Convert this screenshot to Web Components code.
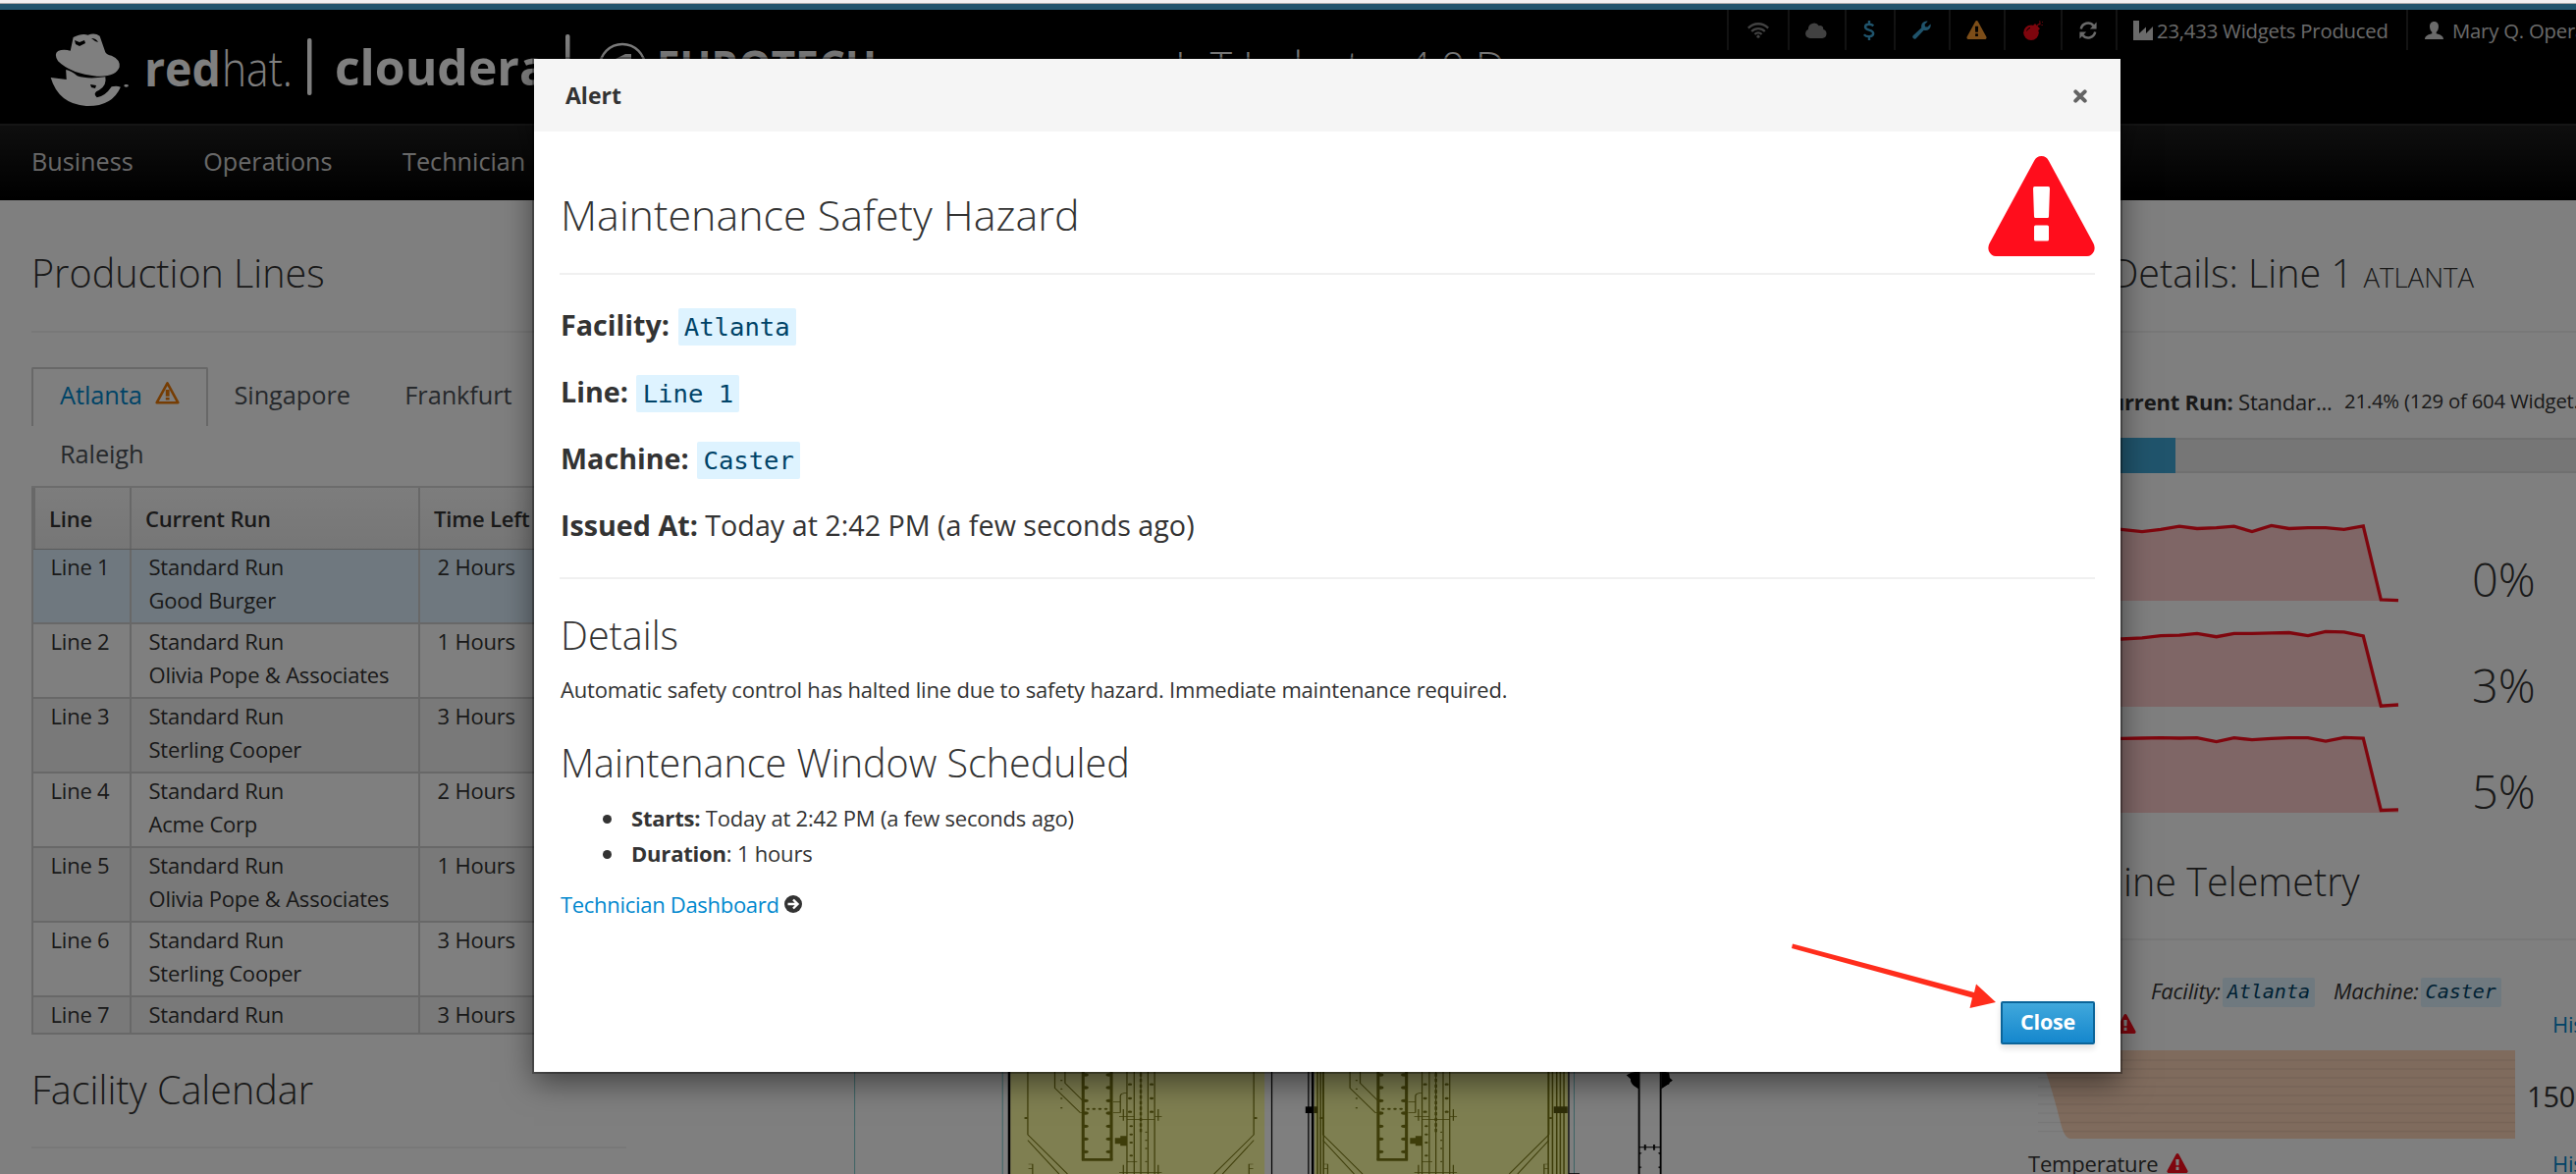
<!DOCTYPE html>
<html lang="en">
<head>
<meta charset="utf-8">
<title>IoT Industry 4.0 Demo</title>
<style>
  html, body { margin: 0; padding: 0; height: 1196px; overflow: hidden; }
  body { font-family: "Open Sans", "Noto Sans", sans-serif; font-size: 22px; letter-spacing: -.2px; color: #333; background: #fff; position: relative; }
</style>
</head>
<body>
<app-shell>
  <brand-bar slot="brand"></brand-bar>
  <nav-bar slot="nav"></nav-bar>
  <production-lines slot="left"></production-lines>
  <plant-drawing slot="center"></plant-drawing>
  <run-details slot="right"></run-details>
  <machine-telemetry slot="right"></machine-telemetry>
</app-shell>
<alert-dialog heading="Alert">
  <alert-summary></alert-summary>
</alert-dialog>
<arrow-callout></arrow-callout>

<script>
const icons = {
  warn: '<svg viewBox="0 0 109 102"><path fill="currentColor" fill-rule="evenodd" d="M54.500 0 Q59.500 0 62 5 L107.500 89 Q109.500 93 108 97 Q105.500 102 101 102 H8 Q3.500 102 1 97 Q-.5 93 1.500 89 L47 5 Q49.500 0 54.500 0Z M47.500 31 Q46 31 46 33 L47 61.500 Q47 63 48.500 63 H60.500 Q62 63 62 61.500 L63 33 Q63 31 61.500 31Z M48.500 70.500 Q47 70.500 47 72 V85 Q47 86.500 48.500 86.500 H60.500 Q62 86.500 62 85 V72 Q62 70.500 60.500 70.500Z"/></svg>',
  warnOutline: '<svg viewBox="0 0 25 24"><path fill="none" stroke="currentColor" stroke-width="2.600" stroke-linejoin="round" d="M12.500 2.400 L23.300 22.200 H1.700Z"/><path fill="currentColor" d="M10.800 9h3.800v6.800h-3.800zM10.800 17h3.800v2.600h-3.800z"/></svg>',
  wifi: '<svg viewBox="0 0 22 16"><g fill="none" stroke="currentColor" stroke-width="2.300"><path d="M.8 5.600 C6.500-.2 15.500-.2 21.200 5.600"/><path d="M4.200 9 C8 5.200 14 5.200 17.800 9"/><path d="M7.400 12 C9.500 10 12.500 10 14.600 12"/></g><circle cx="11" cy="14.200" r="1.600" fill="currentColor"/></svg>',
  cloud: '<svg viewBox="0 0 22 16"><path fill="currentColor" d="M4.800 16 A4.800 4.800 0 0 1 3 6.800 A5.900 5.900 0 0 1 13.800 3.200 A3.300 3.300 0 0 1 18.200 7 A4.600 4.600 0 0 1 17.300 16Z"/></svg>',
  dollar: '<svg viewBox="0 0 12 20"><path fill="none" stroke="currentColor" stroke-width="2.400" d="M10.300 5.400 C8.500 3.400 2 2.800 2 6.400 C2 10.400 10.200 8.800 10.200 13 C10.200 17 3 17 .8 14.200 M6 0V3.500 M6 16.500V20"/></svg>',
  wrench: '<svg viewBox="0 0 19 19"><path fill="currentColor" d="M.7 15.300 L9.300 7.200 A5.300 5.300 0 0 1 15.800 .7 L12.600 3.800 L13 6.200 L15.400 6.500 L18.500 3.400 A5.300 5.300 0 0 1 11.700 9.800 L3.700 18.200 A2.100 2.100 0 0 1 .7 15.300Z"/></svg>',
  bomb: '<svg viewBox="0 0 20 20"><circle cx="8" cy="12.200" r="7.800" fill="currentColor"/><path fill="currentColor" d="M9.500 5.500 L12 3 L17 8.200 L14.500 10.500Z"/><path d="M3.500 10.500 Q4.500 7.800 7 7.300" fill="none" stroke="#000" stroke-width="1"/><path d="M14 5.500 Q15.500 3 17.500 4" fill="none" stroke="currentColor" stroke-width="1.200"/><path d="M16 1h1.500M19 1.500h.8M18.500 4.500h1.200M16.500 2.500h1" stroke="currentColor" stroke-width="1"/></svg>',
  refresh: '<svg viewBox="0 0 18 18"><g fill="none" stroke="currentColor" stroke-width="2.500"><path d="M1.800 7.500 A7.200 7.200 0 0 1 14.500 4.300"/><path d="M16.200 10.500 A7.200 7.200 0 0 1 3.500 13.700"/></g><path fill="currentColor" d="M17.600 .6V7.400H10.800ZM.4 17.400V10.600H7.200Z"/></svg>',
  industry: '<svg viewBox="0 0 20 20"><path fill="currentColor" d="M0 0H6V13L13 6.500V13L20 6V20H0Z"/></svg>',
  user: '<svg viewBox="0 0 19 18"><path fill="currentColor" d="M9.500 0C12.600 0 14 2.300 14 5C14 7.600 13 9.600 11.700 10.800V12.300C14.500 13 19 14.200 19 18H0C0 14.200 4.500 13 7.300 12.300V10.800C6 9.600 5 7.600 5 5C5 2.300 6.400 0 9.500 0Z"/></svg>',
  times: '<svg viewBox="0 0 14 14"><path fill="none" stroke="currentColor" stroke-width="4" stroke-linecap="round" d="M2.300 2.300L11.700 11.700M11.700 2.300L2.300 11.700"/></svg>',
  arrow: '<svg viewBox="0 0 18 18"><circle cx="9" cy="9" r="9" fill="currentColor"/><path fill="none" stroke="#fff" stroke-width="2.400" d="M3.500 9H13M9 4.500L13.500 9L9 13.500"/></svg>'
};

function define(name, render) {
  customElements.define(name, class extends HTMLElement {
    constructor() { super(); this.attachShadow({ mode: 'open' }); }
    connectedCallback() { this.shadowRoot.innerHTML = render(this); }
  });
}

define('ui-icon', el => `<style>
  :host { display: inline-block; flex: none; }
  svg { display: block; width: 100%; height: 100%; }
</style>${icons[el.getAttribute('name')]}`);

define('app-shell', () => `<style>
  :host { display: flex; flex-direction: column; width: 2624px; height: 1196px; overflow: hidden; }
  .chrome { height: 3px; background: #f0f0f0; border-bottom: 1px solid #a9a9a9; flex: none; }
  .accent { height: 6px; background: #40a8d8; flex: none; }
  .page { position: relative; flex: 1; display: flex; flex-direction: column; min-height: 0; background: #fff; }
  main { display: flex; flex: 1; min-height: 0; overflow: hidden; }
  .left { width: 608px; padding-left: 32px; flex: none; }
  .center { width: 1426px; flex: none; display: flex; flex-direction: column; }
  .right { width: 700px; flex: none; display: flex; flex-direction: column; }
  .shade { position: absolute; inset: 0; background: rgba(0,0,0,.5); }
</style>
<div class="chrome"></div>
<div class="page">
  <div class="accent"></div>
  <slot name="brand"></slot>
  <slot name="nav"></slot>
  <main><div class="left"><slot name="left"></slot></div><div class="center"><slot name="center"></slot></div><div class="right"><slot name="right"></slot></div></main>
  <div class="shade"></div>
</div>`);

define('brand-bar', () => `<style>
  :host { display: flex; height: 116px; background: #000; flex: none; color: #d4d4d4; }
  .logo { width: 1197px; height: 116px; flex: none; display: block; letter-spacing: 0; }
  h1 { margin: 0; font-weight: 300; font-size: 42.500px; letter-spacing: 0; line-height: 64px; padding-top: 25px; width: 562px; white-space: nowrap; color: #fff; }
  .status { display: flex; height: 42px; width: 865px; overflow: hidden; }
</style>
<svg class="logo" viewBox="0 10 1197 116">
  <g fill="#fff" stroke="none">
    <g transform="scale(.574 .3333)">
      <path d="M130 114 Q146 100 156 107 Q168 98 177 110 L187 160 Q190 168 198 170 Q214 182 212 205 Q206 236 172 233 Q126 226 103 187 Q95 165 103 156 Q112 149 125 155Z"/>
      <path d="M117 213 Q126 215 137 232 Q155 243 187 235 Q190 262 176 275 Q163 284 172 298 Q187 294 198 265 Q207 261 214 266 Q199 326 153 324 Q104 318 90 237 L118 243Z"/>
      <circle cx="224" cy="262" r="4"/>
    </g>
    <path fill="#000" d="M76 41l5 2 5-2 1 3-6 3-4-2zM93 39q5 0 7 4l-3-1zM92 86l6 1-1 3-4-1z"/>
    <text x="147" y="88" font-family="Open Sans" font-weight="700" font-size="49" textLength="78" lengthAdjust="spacingAndGlyphs">red</text>
    <text x="226" y="88" font-family="Open Sans" font-weight="300" font-size="49" textLength="72" lengthAdjust="spacingAndGlyphs">hat.</text>
    <rect x="313" y="39" width="4.500" height="58" rx="2"/>
    <text x="341" y="87" font-family="Open Sans" font-weight="700" font-size="50" textLength="218" lengthAdjust="spacingAndGlyphs">cloudera</text>
    <rect x="576" y="35" width="4.500" height="58" rx="2"/>
    <text x="669" y="84" font-family="Open Sans" font-weight="700" font-size="44" textLength="224" lengthAdjust="spacingAndGlyphs">EUROTECH</text>
    <path d="M627 60l10-5h6v6h-14z"/>
  </g>
  <circle cx="634" cy="68" r="23" fill="none" stroke="#fff" stroke-width="2.500"/>
</svg>
<h1>IoT Industry 4.0 Demo</h1>
<div class="status">
  <status-item style="width:60px;color:#848484"><ui-icon name="wifi" style="width:22px;height:16px"></ui-icon></status-item>
  <status-item style="width:54px;padding-right:2px;color:#848484"><ui-icon name="cloud" style="width:22px;height:16px"></ui-icon></status-item>
  <status-item style="width:46px;padding-right:2px;color:#40a8d8"><ui-icon name="dollar" style="width:12px;height:20px"></ui-icon></status-item>
  <status-item style="width:52px;padding-right:2px;color:#40a8d8"><ui-icon name="wrench" style="width:19px;height:19px"></ui-icon></status-item>
  <status-item style="width:52px;padding-right:2px;color:#fb9d32"><ui-icon name="warn" style="width:21px;height:19px;margin-bottom:1px"></ui-icon></status-item>
  <status-item style="width:56px;color:#ff0d1c"><ui-icon name="bomb" style="width:20px;height:20px"></ui-icon></status-item>
  <status-item style="width:52px;padding-right:2px"><ui-icon name="refresh" style="width:18px;height:18px"></ui-icon></status-item>
  <status-item style="width:278px;padding-left:16px;justify-content:flex-start"><ui-icon name="industry" style="width:20px;height:20px;margin-right:4px"></ui-icon>23,433 Widgets Produced</status-item>
  <status-item style="width:230px;justify-content:flex-start;padding-left:17px"><ui-icon name="user" style="width:19px;height:18px;margin-right:9px"></ui-icon>Mary Q. Operator</status-item>
</div>`);

define('status-item', () => `<style>
  :host { display: flex; flex: none; align-items: center; justify-content: center; height: 41px; border-left: 2px solid #262626; font-size: 20.300px; white-space: nowrap; }
</style><slot></slot>`);

define('nav-bar', () => `<style>
  :host { display: flex; flex: none; height: 76px; border-top: 2px solid #2a2a2a; background: linear-gradient(#1d1d1d, #000); color: #d1d1d1; font-size: 25.200px; letter-spacing: 0; line-height: 73px; padding-left: 32px; }
  a { margin-right: 71.500px; }
</style><a>Business</a><a>Operations</a><a>Technician</a>`);

define('section-title', () => `<style>
  :host { display: block; font-size: 39.500px; letter-spacing: 0; font-weight: 300; line-height: 60px; height: 60px; white-space: nowrap; border-bottom: 2px solid #f0f0f0; padding-bottom: 29px; }
</style><slot></slot>`);

define('code-tag', () => `<style>
  :host { display: inline-block; font-family: "DejaVu Sans Mono", monospace; letter-spacing: 0; background: #def3ff; color: #004368; border-radius: 2px; }
</style><slot></slot>`);

const rows = [
  ['Line 1', 'Good Burger', '2 Hours'], ['Line 2', 'Olivia Pope &amp; Associates', '1 Hours'],
  ['Line 3', 'Sterling Cooper', '3 Hours'], ['Line 4', 'Acme Corp', '2 Hours'],
  ['Line 5', 'Olivia Pope &amp; Associates', '1 Hours'], ['Line 6', 'Sterling Cooper', '3 Hours'],
  ['Line 7', '', '3 Hours']
];
define('line-table', () => `<style>
  :host { display: block; height: 555px; border: 2px solid #d1d1d1; border-top: 0; overflow: hidden; }
  .row { display: grid; grid-template-columns: 100px 294px 1fr; height: 74px; border-bottom: 2px solid #d1d1d1; line-height: 34px; }
  .row > div { padding: 0 0 0 17.500px; border-right: 2px solid #d1d1d1; white-space: nowrap; }
  .row:nth-child(odd) { background: #f3f3f3; }
  .row.sel { background: #def1ff; }
  .head { height: 62px; border-bottom: 1px solid #b5b5b5; background: linear-gradient(#fafafa, #ededed); font-weight: 600; line-height: 62px; }
  .head > div { padding: 0 0 0 14px; }
  .head > div:first-child { padding-left: 14px; border-left: 2px solid #d1d1d1; }
</style>
<div class="row head"><div>Line</div><div>Current Run</div><div>Time Left</div></div>
${rows.map((r, i) => `<div class="row${i ? '' : ' sel'}"><div>${r[0]}</div><div>Standard Run<br>${r[1]}</div><div>${r[2]}</div></div>`).join('')}`);

define('production-lines', () => `<style>
  :host { display: block; padding-top: 44px; }
  .tabs { display: flex; flex-wrap: wrap; margin-top: 35px; border-bottom: 2px solid #d9d9d9; height: 121px; align-content: flex-start; font-size: 25.400px; letter-spacing: -.1px; line-height: 52px; color: #4d5258; }
  .tab { display: flex; box-sizing: border-box; height: 60px; border: 2px solid transparent; border-bottom: 0; padding: 0 27px 0 24.500px; }
  .tab.on { width: 180px; border-color: #d1d1d1; color: #0088ce; border-radius: 2px 2px 0 0; padding: 0 0 0 27px; }
  ui-icon { width: 25px; height: 24px; margin: 12px 0 0 13px; color: #ec7a08; }
  .cal { margin-top: 26px; width: 606px; padding-bottom: 28px; }
</style>
<section-title>Production Lines</section-title>
<div class="tabs"><div class="tab on">Atlanta<ui-icon name="warnOutline"></ui-icon></div><div class="tab">Singapore</div><div class="tab">Frankfurt</div><div class="tab" style="padding-left:27px">Raleigh</div></div>
<line-table></line-table>
<section-title class="cal">Facility Calendar</section-title>`);

define('spark-row', el => `<style>
  :host { display: flex; height: 108px; }
  svg { width: 377px; height: 108px; flex: none; overflow: visible; }
  span { font-size: 47px; letter-spacing: 0; font-weight: 300; line-height: 64px; margin: 42px 0 0 75px; }
</style>
<svg viewBox="0 0 377 108"><path fill="#ffcccc" d="M0 ${el.getAttribute('first')} L${el.getAttribute('points')} V96 H0Z"/><polyline fill="none" stroke="#ff0d1c" stroke-width="3.300" points="0 ${el.getAttribute('first')} ${el.getAttribute('points')}"/></svg><span><slot></slot></span>`);

const xs = [95, 116, 135, 154, 172, 191.700, 209.700, 228, 247.700, 265.700, 285, 303, 321.700, 341.300, 359.300, 377];
const series = ys => xs.map((x, i) => `${x} ${ys[i]}`).join(' ');
const s1 = [23.300, 25.600, 23.300, 20.200, 22.500, 21.700, 20.200, 25.600, 19.400, 22.500, 21.700, 21.700, 23.300, 19.800, 94.800, 95.600];
const s2 = [27, 25.900, 23.600, 23.200, 21.300, 24.700, 21.300, 21.300, 20.900, 20.500, 23.600, 19.400, 19.800, 24, 95.200, 94];
const s3 = [20.400, 20, 19.700, 20, 19.700, 23.500, 19.700, 21.600, 20.400, 19.700, 19.700, 23.100, 19.300, 20, 93.500, 92.800];

define('run-details', () => `<style>
  :host { display: block; padding-top: 44px; height: 620px; flex: none; }
  small { font-size: 27.600px; line-height: 1; }
  .info { display: flex; margin-top: 53px; height: 34px; align-items: baseline; line-height: 34px; white-space: nowrap; }
  .info b { font-weight: 700; }
  .info div { width: 243px; margin-left: 70px; }
  .info span { font-size: 20.300px; line-height: 30px; margin-left: 9px; position: relative; top: -2px; }
  .bar { margin-top: 20px; height: 32px; background: #ececec; border-top: 2px solid #e0e0e0; border-bottom: 2px solid #e0e0e0; }
  .fill { width: 150px; height: 36px; margin-top: -2px; background: #40a8d8; }
  .charts { padding-top: 34px; }
</style>
<section-title>Line Details: Line 1 <small>ATLANTA</small></section-title>
<div class="info"><div><b>Current Run:</b> Standar...</div><span>21.4% (129 of 604 Widget...</span></div>
<div class="bar"><div class="fill"></div></div>
<div class="charts">
<spark-row first="22" points="${series(s1)}">0%</spark-row>
<spark-row first="22" points="${series(s2)}">3%</spark-row>
<spark-row first="20" points="${series(s3)}">5%</spark-row>
</div>`);

define('machine-telemetry', () => `<style>
  :host { display: block; flex: none; }
  section-title { padding-bottom: 28px; }
  .ids { display: flex; margin: 34px 0 0 125px; font-style: italic; line-height: 34px; height: 34px; }
  code-tag { font-size: 20px; line-height: 28px; padding: 0 5px; height: 30px; margin-top: 4px; }
  .lab { display: flex; height: 34px; line-height: 34px; align-items: flex-start; }
  .lab ui-icon { width: 22px; height: 20px; color: #ff0d1c; margin-top: 7px; }
  .lab a { color: #0088ce; margin-left: auto; }
  .chart { display: flex; height: 90px; margin-top: 10px; }
  .chart svg { width: 496px; height: 90px; flex: none; }
  .chart b { font-weight: 400; font-size: 29px; line-height: 93px; margin-left: 12px; }
</style>
<section-title>Machine Telemetry</section-title>
<div class="ids">Facility:<code-tag style="margin-left:2px">Atlanta</code-tag><span style="margin-left:19px">Machine:</span><code-tag style="margin-left:2px">Caster</code-tag></div>
<div class="lab"><ui-icon name="warn" style="margin-left:88px"></ui-icon><a style="width:166px">History</a></div>
<div class="chart"><svg viewBox="0 0 496 90"><path fill="#fed6ba" d="M8 0 H496 V90 H43 Q37 90 33 74 Q25 42 17 19 Q13 4 8 0Z"/><path stroke="#000" stroke-opacity=".06" stroke-width="1.500" d="${[10,19,28,37,46,55,64,73.500,82.500].map(y => `M10 ${y}H496`).join('')}"/></svg><b>150</b></div>
<div class="lab" style="margin-top:8px">Temperature<ui-icon name="warn" style="margin-left:9px"></ui-icon><a style="width:166px">History</a></div>`);

/* One press cell of the plant floor drawing, in local drawing units. */
const cell = `
  <g fill="none" stroke="#7c7a14" stroke-width="2">
    <path d="M338 30V258L404 378M338 275L390 378M714 30V258L648 378M714 275L662 378"/>
    <path d="M383 30V115L425 190H430M400 30V100L430 155"/>
    <path stroke-width="5" d="M430 30V334H477V30" />
    <path stroke-width="8" d="M428 334H479"/>
    <path d="M503 30V378M515 30V378M538 30V378M549 30V378M526 30V378" />
    <path stroke-width="4" stroke-dasharray="10 7" d="M526 70V250"/>
    <path d="M480 157H492V190H480M492 160V140Q492 130 503 130M490 202H515M549 202H561M497 180V215M555 180V215M503 212H549M497 350V378M555 350V378M490 374H561M503 340H520M339 348H346V378M339 362H346M713 348H706V378M713 362H706"/>
  </g>
  <g fill="#7c7a14">
    <path d="M483 268H492V262H503V292H492V286H483Z"/>
    ${[75,114,154,192,232,271,310].map(y => `<circle cx="434" cy="${y}" r="5"/><circle cx="473" cy="${y}" r="5"/>`).join('')}
    ${[438,448,458,468].map(x => `<circle cx="${x}" cy="179" r="3"/>`).join('')}
    ${[104,147,188].map(y => `<circle cx="508" cy="${y}" r="3.500"/><circle cx="544" cy="${y}" r="3.500"/>`).join('')}
    ${[92,118,147,176].map(y => `<circle cx="394" cy="${y}" r="2"/>`).join('')}
    ${[232,257,282,322].map(y => `<circle cx="510" cy="${y}" r="3"/><circle cx="535" cy="${y + 18}" r="2"/>`).join('')}
    <circle cx="335" cy="207" r="3"/><circle cx="717" cy="207" r="3"/>
  </g>`;
define('plant-drawing', () => `<style>
  :host { display: block; padding: 876px 0 0 200px; }
  svg { display: block; width: 960px; height: 116px; }
</style>
<svg viewBox="0 30 1568 348" preserveAspectRatio="none">
  <rect x="309" y="30" width="423" height="348" fill="#fffea2"/>
  <rect x="815" y="30" width="422" height="348" fill="#fcffa2"/>
  <path d="M50 30V378M296 30V378M1247 30V378" stroke="#4fb4b8" stroke-width="1.600"/>
  ${cell}
  <g transform="translate(491 0)">${cell}</g>
  <path stroke="#000" stroke-width="4" d="M307 30V378M812 30V378"/>
  <path stroke="#000" stroke-width="2" d="M744 30V378M805 30V378M1238 30V378M1238 376H1256"/>
  <path stroke="#7c7a14" stroke-width="2.500" d="M820 30V378M825 30V378M830 30V378M1204 30V378M1211 30V378M1218 30V378M1224 30V378M1230 30V378"/>
  <rect x="800" y="172" width="14" height="20"/><path fill="#5c5a10" d="M814 172h6v20h-6zM1213 172h23v20h-23z"/>
  <g fill="none" stroke="#000" stroke-width="3"><path d="M1355 30V378M1391 30V378M1355 296H1391M1365 288V305M1380 288V305"/></g>
  <path d="M1354 64V118L1346 108Q1340 98 1341 88L1334 76L1342 68ZM1392 64V118L1402 106Q1406 104 1406 98L1411 92L1406 84L1405 68Z"/>
  <path d="M1356 312l4 2-4 4zM1356 355l4 2-4 4zM1390 312l-4 2 4 4zM1390 355l-4 2 4 4z"/>
</svg>`);

define('alert-dialog', el => `<style>
  :host { position: absolute; left: 544px; top: 60px; width: 1616px; height: 1032px; display: flex; flex-direction: column; background: #fff; box-shadow: 0 0 0 2px rgba(0,0,0,.3), 0 10px 30px rgba(0,0,0,.5); }
  header { display: flex; align-items: center; justify-content: space-between; flex: none; height: 74px; background: #f5f5f5; padding: 0 34px 0 32px; font-weight: 700; font-size: 23px; letter-spacing: 0; }
  header ui-icon { width: 14px; height: 14px; color: #636363; margin-top: 2px; }
  .body { flex: 1; padding: 0 26px; }
  footer { display: flex; justify-content: flex-end; padding: 0 26px 28px; }
  button { font: 700 21.500px/38px "Open Sans", sans-serif; letter-spacing: -.2px; color: #fff; width: 96px; height: 44px; padding: 0 0 2px; border: 2px solid #0b6499; border-radius: 2px; background: linear-gradient(#40a8dc, #1587cd); box-shadow: 0 4px 6px rgba(3,3,3,.12); }
</style>
<header><span>${el.getAttribute('heading')}</span><ui-icon name="times"></ui-icon></header>
<div class="body"><slot></slot></div>
<footer><button>Close</button></footer>`);

define('alert-field', el => `<style>
  :host { display: block; font-size: 28.700px; letter-spacing: 0; line-height: 44px; height: 44px; margin-bottom: 24px; white-space: nowrap; }
  b { font-weight: 700; }
</style><b>${el.getAttribute('label')}:</b> <slot></slot>`);

define('alert-summary', () => `<style>
  :host { display: block; }
  .top { display: flex; justify-content: space-between; height: 144px; border-bottom: 2px solid #f0f0f0; }
  h2, h3 { margin: 0; font-weight: 300; white-space: nowrap; letter-spacing: 0; padding-left: 1px; }
  h2 { font-size: 43px; line-height: 60px; padding-top: 55px; }
  h3 { font-size: 39.500px; line-height: 60px; }
  .top ui-icon { width: 109px; height: 102px; margin-top: 25px; color: #ff0d1c; }
  .fields { height: 279px; padding: 29px 0 0 1px; border-bottom: 2px solid #f0f0f0; }
  code-tag { font-size: 25.600px; line-height: 38px; padding: 0 6.300px; height: 38px; margin-left: 1px; }
  p { margin: 0; line-height: 36px; padding-left: 1px; }
  ul { margin: 0; padding: 0 0 0 48px; line-height: 36px; list-style: none; }
  li { display: flex; align-items: center; white-space: pre; }
  li::before { content: ""; width: 9px; height: 9px; border-radius: 50%; background: #333; margin: 2px 20px 0 -4px; }
  b { font-weight: 700; }
  a { color: #0088ce; letter-spacing: -.3px; }
  .link { display: flex; align-items: center; height: 30px; margin: 19px 0 0 1px; }
  .link ui-icon { width: 18px; height: 18px; margin-left: 5px; color: #333; }
</style>
<div class="top"><h2>Maintenance Safety Hazard</h2><ui-icon name="warn"></ui-icon></div>
<div class="fields">
  <alert-field label="Facility"><code-tag>Atlanta</code-tag></alert-field>
  <alert-field label="Line"><code-tag>Line 1</code-tag></alert-field>
  <alert-field label="Machine"><code-tag>Caster</code-tag></alert-field>
  <alert-field label="Issued At">Today at 2:42 PM (a few seconds ago)</alert-field>
</div>
<h3 style="margin-top:27px">Details</h3>
<p style="margin-top:7px">Automatic safety control has halted line due to safety hazard. Immediate maintenance required.</p>
<h3 style="margin-top:27px">Maintenance Window Scheduled</h3>
<ul style="margin-top:8px"><li><b>Starts:</b> Today at 2:42 PM (a few seconds ago)</li><li><b>Duration</b>: 1 hours</li></ul>
<div class="link"><a>Technician Dashboard</a><ui-icon name="arrow"></ui-icon></div>`);

define('arrow-callout', () => `<style>
  :host { position: absolute; left: 1820px; top: 955px; width: 220px; height: 80px; }
  svg { display: block; }
</style><svg width="220" height="80" viewBox="1820 955 220 80"><path fill="#ff2d1c" d="M1826 961.500L2011 1011L2013 1002.500L2033 1021L2006.500 1027L2009 1016.500L1825 966Z"/></svg>`);
</script>
</body>
</html>
